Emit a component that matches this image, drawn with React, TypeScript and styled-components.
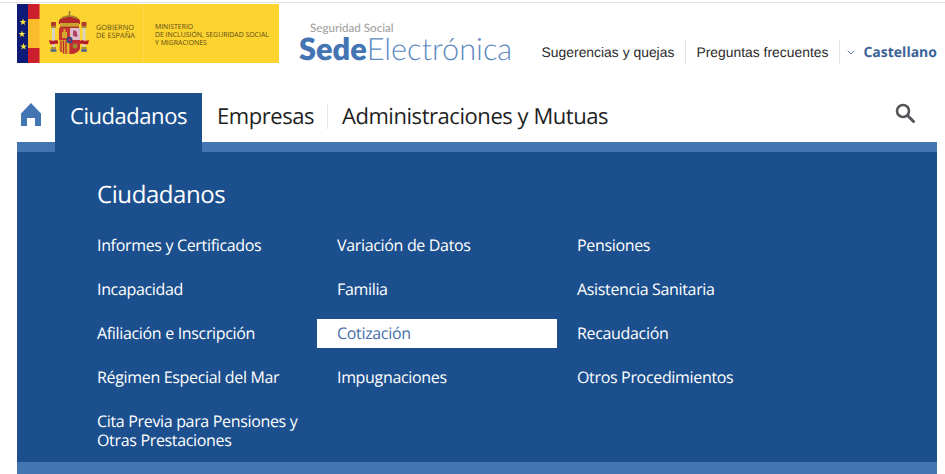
import React from "react";
import styled, { createGlobalStyle } from "styled-components";

const Global = createGlobalStyle`
  html, body { margin: 0; padding: 0; background: #fff; overflow: hidden; }
  body { font-family: "Open Sans", "Liberation Sans", sans-serif; text-rendering: geometricPrecision; }
  * { box-sizing: border-box; }
`;

const Page = styled.div`
  width: 945px;
  height: 474px;
  overflow: hidden;
  padding-top: 2px;
`;
const TopRule = styled.div`
  height: 1px;
  background: #e2e2e2;
`;
const Header = styled.header`
  display: flex;
  height: 90px;
  padding: 1px 8px 0 17px;
`;
const GovLogo = styled.div`
  display: flex;
  flex: none;
  width: 262px;
  height: 59px;
  background: #fdd32f;
`;
const FlagArt = styled.svg`
  display: block;
  flex: none;
`;
const GovName = styled.div`
  flex: none;
  width: 47px;
  padding-top: 20px;
  font-size: 7.4px;
  line-height: 8px;
  color: #5c4a17;
`;
const MinistryName = styled.div`
  flex: 1;
  padding: 20px 0 0 11px;
  border-left: 1px solid #fcd84a;
  font-size: 6.9px;
  line-height: 8px;
  color: #5c4a17;
  white-space: nowrap;
`;
const Brand = styled.div`
  margin: 18px 0 0 20px;
  font-family: Lato, "Open Sans", sans-serif;
`;
const BrandTop = styled.div`
  margin-left: 11px;
  font-size: 11.6px;
  line-height: 14px;
  font-weight: 500;
  color: #a3a3a3;
`;
const BrandName = styled.div`
  margin-top: -4px;
  font-size: 30.7px;
  line-height: 33px;
  font-weight: 300;
  color: #5f8bc0;
  white-space: nowrap;
  b {
    font-weight: 800;
    color: #4375b3;
  }
`;
const Links = styled.nav`
  display: flex;
  align-items: center;
  height: 24px;
  margin: 36px 0 0 auto;
`;
const TopLink = styled.a`
  padding: 0 11px 0 10px;
  border-left: ${(p: { $sep?: boolean }) => (p.$sep ? "1px solid #e2e2e2" : "none")};
  height: 24px;
  font-family: "Liberation Sans", Arial, sans-serif;
  font-size: 13.9px;
  line-height: 24px;
  color: #2b2b2b;
  white-space: nowrap;
`;
const Lang = styled.a`
  display: flex;
  align-items: center;
  gap: 8px;
  height: 24px;
  padding-left: 7px;
  border-left: 1px solid #e2e2e2;
  font-size: 14px;
  font-weight: 700;
  color: #3c6397;
  white-space: nowrap;
`;
const NavRow = styled.nav`
  display: flex;
  align-items: flex-start;
  height: 49px;
  padding: 0 30px 0 21px;
`;
const HomeLink = styled.a`
  display: block;
  width: 20px;
  height: 23px;
  margin: 10px 14px 0 0;
`;
const Tab = styled.a<{ $active?: boolean }>`
  position: relative;
  z-index: 1;
  height: ${(p) => (p.$active ? "59px" : "49px")};
  padding: ${(p) => (p.$active ? "0 15px" : "0 13px 0 15px")};
  background: ${(p) => (p.$active ? "#1c4f8d" : "transparent")};
  color: ${(p) => (p.$active ? "#fff" : "#1f1f1f")};
  font-size: 22px;
  letter-spacing: -0.45px;
  line-height: 46px;
  white-space: nowrap;
`;
const TabSep = styled.span`
  flex: none;
  width: 1px;
  height: 25px;
  margin: 11px -1px 0 0;
  background: #e6e6e6;
`;
const SearchLink = styled.a`
  display: block;
  margin: 10px 0 0 auto;
  width: 20px;
  height: 20px;
`;
const Band = styled.div`
  margin: 0 8px 0 17px;
  background: #4375b3;
  padding: 10px 0 12px;
`;
const Panel = styled.section`
  background: #1c4f8d;
  padding: 27px 0 7px 60px;
  height: 310px;
`;
const PanelTitle = styled.h2`
  margin: 0 0 20px 20px;
  font-size: 24px;
  letter-spacing: -0.42px;
  line-height: 32px;
  font-weight: 400;
  color: #fff;
`;
const MenuGrid = styled.ul`
  display: grid;
  grid-template-columns: repeat(3, 240px);
  row-gap: 15px;
  margin: 0;
  padding: 0;
  list-style: none;
`;
const MenuItem = styled.li<{ $active?: boolean }>`
  padding: 5px 15px 5px 20px;
  font-size: 16px;
  letter-spacing: -0.33px;
  line-height: 19px;
  background: ${(p) => (p.$active ? "#fff" : "transparent")};
  color: ${(p) => (p.$active ? "#466fa9" : "#fff")};
`;

const items = [
  "Informes y Certificados",
  "Variación de Datos",
  "Pensiones",
  "Incapacidad",
  "Familia",
  "Asistencia Sanitaria",
  "Afiliación e Inscripción",
  "Cotización",
  "Recaudación",
  "Régimen Especial del Mar",
  "Impugnaciones",
  "Otros Procedimientos",
  "Cita Previa para Pensiones y Otras Prestaciones",
];

const Star = ({ x, y }: { x: number; y: number }) => (
  <polygon
    transform={`translate(${x} ${y}) scale(3.6)`}
    points="0,-1 .24,-.31 .95,-.31 .38,.12 .59,.81 0,.4 -.59,.81 -.38,.12 -.95,-.31 -.24,-.31"
    fill="#fbe73a"
  />
);

const Pillar = ({ x }: { x: number }) => (
  <g>
    <rect x={x - 1.5} y={21} width={3} height={23} fill="#d9d2c4" />
    <rect x={x - 2.5} y={18} width={5} height={4} rx={1} fill="#b0392e" />
    <rect x={x - 2.5} y={22} width={5} height={2} fill="#a98a2e" />
    <rect x={x - 2.5} y={43} width={5} height={2} fill="#a98a2e" />
    <rect x={x - 3} y={45} width={6} height={3} fill="#7d8184" />
    <rect x={x - 2} y={46} width={4} height={1} fill="#3e5f7a" />
  </g>
);

const GovArt = () => (
  <FlagArt width="79" height="59" viewBox="0 0 79 59">
    <rect width="11" height="59" fill="#0d1a78" />
    <rect x="11" width="11.5" height="59" fill="#fbbb2d" />
    <rect x="11" width="11.5" height="15" fill="#cc1f2d" />
    <rect x="11" y="44" width="11.5" height="15" fill="#cc1f2d" />
    <Star x={6} y={18} />
    <Star x={5} y={30} />
    <Star x={6.5} y={42.5} />
    <g>
      <Pillar x={36.5} />
      <Pillar x={67} />
      <path d="M32 36c4 2 8-1 9 1v3c-2-1-5 1-8 0zM72 36c-4 2-8-1-9 1v3c2-1 5 1 8 0z" fill="#b51c28" />
      <path d="M42 20c-1-4 2-7 6-6 1-2 8-2 9 0 4-1 7 2 6 6z" fill="#b52a26" />
      <path d="M44 15c2-2 4-3 8.500-3s6.500 1 8.500 3" fill="none" stroke="#a5832a" strokeWidth="1.500" />
      <rect x="51.800" y="7" width="1.400" height="6" fill="#8a7a3a" />
      <rect x="43" y="19" width="19" height="3.500" fill="#c9a22f" />
      <rect x="43" y="22.500" width="19" height="1.500" fill="#a8342b" />
      <path d="M42 24h21v19c0 4-4 7-10.500 7S42 47 42 43z" fill="#c9252c" />
      <path d="M53 24h10v12H53z" fill="#dcbdc6" />
      <path d="M56 27c2-1 4 0 4 2s1 2 0 4l-4-1z" fill="#b0406a" />
      <path d="M42 24h11v12H42z" fill="#c6362c" />
      <path d="M45 28h5v6h-5z" fill="#d6a92e" />
      <path d="M46.500 25h2v4h-2z" fill="#d6a92e" />
      <path d="M42 36h10.500v14c-6 0-10.500-3-10.500-7z" fill="#e3b52e" />
      <path d="M44 36.500v11.500M46.500 36.500v13M49 36.500v13" stroke="#bb2b2a" strokeWidth="1.300" />
      <path d="M53 36h10v7c0 4-4 7-10 7z" fill="#c02d33" />
      <circle cx="58" cy="42" r="2.500" fill="#9c8a32" />
      <ellipse cx="52.500" cy="36" rx="3" ry="3.300" fill="#2f4a8f" />
      <circle cx="52.500" cy="36" r="1.300" fill="#c9252c" />
    </g>
  </FlagArt>
);

export default function App() {
  return (
    <Page>
      <Global />
      <TopRule />
      <Header>
        <GovLogo>
          <GovArt />
          <GovName>
            GOBIERNO
            <br />
            DE ESPAÑA
          </GovName>
          <MinistryName>
            MINISTERIO
            <br />
            DE INCLUSIÓN, SEGURIDAD SOCIAL
            <br />Y MIGRACIONES
          </MinistryName>
        </GovLogo>
        <Brand>
          <BrandTop>Seguridad Social</BrandTop>
          <BrandName>
            <b>Sede</b>Electrónica
          </BrandName>
        </Brand>
        <Links>
          <TopLink>Sugerencias y quejas</TopLink>
          <TopLink $sep>Preguntas frecuentes</TopLink>
          <Lang>
            <svg width="8" height="5" viewBox="0 0 8 5" fill="none">
              <path d="M.7.7 4 4l3.300-3.300" stroke="#5f86b8" strokeWidth="1" />
            </svg>
            Castellano
          </Lang>
        </Links>
      </Header>
      <NavRow>
        <HomeLink>
          <svg width="20" height="23" viewBox="0 0 20 23">
            <path d="M10 0 20 10.500V23h-6v-8H6v8H0V10.500z" fill="#4375b3" />
          </svg>
        </HomeLink>
        <Tab $active>Ciudadanos</Tab>
        <Tab>Empresas</Tab>
        <TabSep />
        <Tab>Administraciones y Mutuas</Tab>
        <SearchLink>
          <svg width="20" height="20" viewBox="0 0 20 20" fill="none">
            <circle cx="8" cy="8" r="6" stroke="#55565a" strokeWidth="2.600" />
            <path d="m12.800 12.800 5.700 5.700" stroke="#55565a" strokeWidth="3" strokeLinecap="round" />
          </svg>
        </SearchLink>
      </NavRow>
      <Band>
        <Panel>
          <PanelTitle>Ciudadanos</PanelTitle>
          <MenuGrid>
            {items.map((t) => (
              <MenuItem key={t} $active={t === "Cotización"}>
                {t}
              </MenuItem>
            ))}
          </MenuGrid>
        </Panel>
      </Band>
    </Page>
  );
}
